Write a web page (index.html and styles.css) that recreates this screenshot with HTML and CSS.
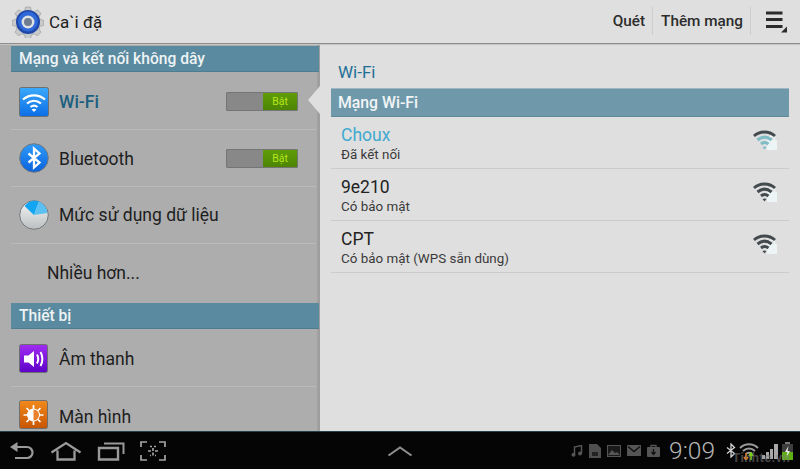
FILE: index.html
```html
<!DOCTYPE html>
<html lang="vi">
<head>
<meta charset="utf-8">
<title>Cài đặt</title>
<link rel="stylesheet" href="styles.css">
</head>
<body>
<div class="app">
  <header class="topbar">
    <div class="brand">
      <svg class="gear" viewBox="0 0 32 32" width="32" height="32">
        <path d="M13.500 1h5l.8 3.600 3 1.200 3.100-2 3.600 3.600-2 3.100 1.200 3 3.600.8v5l-3.600.8-1.200 3 2 3.100-3.600 3.600-3.100-2-3 1.200-.8 3.600h-5l-.8-3.600-3-1.200-3.100 2-3.600-3.600 2-3.100-1.200-3-3.600-.8v-5l3.600-.8 1.200-3-2-3.100 3.600-3.600 3.100 2 3-1.200z" fill="#c9cbcb" stroke="#9c9e9e" stroke-width=".7"/>
        <circle cx="16" cy="16" r="12" fill="#1f47a8"/>
        <circle cx="16" cy="15.500" r="10" fill="#2f68d8"/>
        <circle cx="16" cy="16" r="6.500" fill="#dfe2e4"/>
        <circle cx="16" cy="16" r="4" fill="#6f7c90"/>
      </svg>
      <span class="brand-title">Ca`i đặ</span>
    </div>
    <nav class="actions">
      <span class="action">Quét</span>
      <span class="action">Thêm mạng</span>
      <span class="menu-btn">
        <svg viewBox="0 0 24 24" width="24" height="24">
          <path d="M2 2.500h16.500v3H2zM2 9h16.500v3H2zM2 16h16.500v3H2z" fill="#2c2c2c"/>
          <path d="M23 17.500v6h-6z" fill="#2c2c2c"/>
        </svg>
      </span>
    </nav>
  </header>

  <main class="content">
    <aside class="sidebar">
      <div class="section">Mạng và kết nối không dây</div>
      <div class="row row-first">
        <svg class="ico" viewBox="0 0 30 30" width="30" height="30">
          <defs><linearGradient id="gb" x1="0" y1="0" x2="0" y2="1"><stop offset="0" stop-color="#3aa9fb"/><stop offset="1" stop-color="#0c6ee6"/></linearGradient></defs>
          <rect x="0.500" y="0.500" width="29" height="29" rx="2" fill="url(#gb)" stroke="#6d7070"/>
          <path d="M4 12.500c6.500-5.500 15.500-5.500 22 0M8 16.500c4.300-3.500 9.700-3.500 14 0M11.500 20c2.200-1.700 4.800-1.700 7 0" fill="none" stroke="#fff" stroke-width="2.200"/>
          <path d="M15 25l-2.400-2.500c1.500-1 3.300-1 4.800 0z" fill="#fff"/>
        </svg>
        <span class="label label-active">Wi-Fi</span>
        <span class="toggle"><span class="toggle-off"></span><span class="toggle-on">Bật</span></span>
      </div>
      <div class="row">
        <svg class="ico" viewBox="0 0 30 30" width="30" height="30">
          <defs><linearGradient id="gc" x1="0" y1="0" x2="0" y2="1"><stop offset="0" stop-color="#2f9bfa"/><stop offset="1" stop-color="#0b62dc"/></linearGradient></defs>
          <circle cx="15" cy="15" r="14.300" fill="url(#gc)" stroke="#73787a"/>
          <path d="M9.500 10.500l11 9-5.500 5V5.500l5.500 5-11 9" fill="none" stroke="#fff" stroke-width="2.300"/>
        </svg>
        <span class="label">Bluetooth</span>
        <span class="toggle"><span class="toggle-off"></span><span class="toggle-on">Bật</span></span>
      </div>
      <div class="row">
        <svg class="ico" viewBox="0 0 30 30" width="30" height="30">
          <defs><linearGradient id="gd" x1="0" y1="0" x2="0" y2="1"><stop offset="0" stop-color="#f4f4f4"/><stop offset="1" stop-color="#bcc0c2"/></linearGradient></defs>
          <circle cx="15" cy="15" r="14.300" fill="url(#gd)" stroke="#73787a"/>
          <path d="M15 15L5.500 6A14 14 0 0 1 20 1.500z" fill="#12a5f2"/>
          <path d="M15 15L20 1.500A14 14 0 0 1 28.500 13z" fill="#5cc0f2"/>
        </svg>
        <span class="label label-tight">Mức sử dụng dữ liệu</span>
      </div>
      <div class="row row-more"><span class="label">Nhiều hơn...</span></div>
      <div class="section">Thiết bị</div>
      <div class="row row-first">
        <svg class="ico" viewBox="0 0 30 30" width="30" height="30">
          <defs><linearGradient id="ge" x1="0" y1="0" x2="0" y2="1"><stop offset="0" stop-color="#a12cf2"/><stop offset="1" stop-color="#5d04c8"/></linearGradient></defs>
          <rect x="0.500" y="0.500" width="28" height="28" rx="2" fill="url(#ge)" stroke="#6d7070"/>
          <path d="M5 11.500h4.500L15 7v16l-5.500-4.500H5z" fill="#fff"/>
          <path d="M18 10.500c1.500 2.700 1.500 6.300 0 9M21.500 8c2.500 4 2.500 10 0 14" fill="none" stroke="#fff" stroke-width="2"/>
        </svg>
        <span class="label">Âm thanh</span>
      </div>
      <div class="row row-last">
        <svg class="ico" viewBox="0 0 30 30" width="30" height="30">
          <defs><linearGradient id="gf" x1="0" y1="0" x2="0" y2="1"><stop offset="0" stop-color="#f28a1c"/><stop offset="1" stop-color="#c85504"/></linearGradient></defs>
          <rect x="0.500" y="0.500" width="28" height="28" rx="2" fill="url(#gf)" stroke="#6d7070"/>
          <circle cx="14.500" cy="15" r="6.500" fill="#fff"/>
          <path d="M14.500 5v20M4.500 15h20M7.500 8l14 14M21.500 8l-14 14" stroke="#fff" stroke-width="1.700"/>
          <path d="M14.500 9.500a5.500 5.500 0 0 1 0 11z" fill="#e9822a"/>
        </svg>
        <span class="label">Màn hình</span>
      </div>
    </aside>

    <section class="detail">
      <div class="pointer"></div>
      <div class="detail-title">Wi-Fi</div>
      <div class="detail-section">Mạng Wi-Fi</div>
      <div class="network">
        <div class="net-text"><div class="net-name net-name-on">Choux</div><div class="net-sub">Đã kết nối</div></div>
        <svg class="net-ico" viewBox="0 0 26 24" width="26" height="24">
          <rect x="14" y="11" width="10" height="10" fill="#edf4f6"/>
          <path d="M16.500 11V9.500a2.500 2.500 0 0 1 5 0V11" fill="none" stroke="#edf4f6" stroke-width="1.500"/>
          <path d="M1 7c6-5.300 15-5.300 21 0" fill="none" stroke="#434a4e" stroke-width="3"/>
          <path d="M4.500 11c4.500-3.700 9.500-3.700 14 0M8 15c2.500-2 5-2 7.500 0" fill="none" stroke="#7fbcc6" stroke-width="3"/>
          <path d="M11.500 20.500l-2-2.500c1.300-.8 2.700-.8 4 0z" fill="#7fbcc6"/>
        </svg>
      </div>
      <div class="network">
        <div class="net-text"><div class="net-name">9e210</div><div class="net-sub">Có bảo mật</div></div>
        <svg class="net-ico" viewBox="0 0 26 24" width="26" height="24">
          <rect x="14" y="11" width="10" height="10" fill="#edf4f6"/>
          <path d="M16.500 11V9.500a2.500 2.500 0 0 1 5 0V11" fill="none" stroke="#edf4f6" stroke-width="1.500"/>
          <path d="M1 7c6-5.300 15-5.300 21 0M4.500 11c4.500-3.700 9.500-3.700 14 0M8 15c2.500-2 5-2 7.500 0" fill="none" stroke="#434a4e" stroke-width="3"/>
          <path d="M11.500 20.500l-2-2.500c1.300-.8 2.700-.8 4 0z" fill="#434a4e"/>
        </svg>
      </div>
      <div class="network">
        <div class="net-text"><div class="net-name">CPT</div><div class="net-sub">Có bảo mật (WPS sẵn dùng)</div></div>
        <svg class="net-ico" viewBox="0 0 26 24" width="26" height="24">
          <rect x="14" y="11" width="10" height="10" fill="#edf4f6"/>
          <path d="M16.500 11V9.500a2.500 2.500 0 0 1 5 0V11" fill="none" stroke="#edf4f6" stroke-width="1.500"/>
          <path d="M1 7c6-5.300 15-5.300 21 0M4.500 11c4.500-3.700 9.500-3.700 14 0M8 15c2.500-2 5-2 7.500 0" fill="none" stroke="#434a4e" stroke-width="3"/>
          <path d="M11.500 20.500l-2-2.500c1.300-.8 2.700-.8 4 0z" fill="#434a4e"/>
        </svg>
      </div>
    </section>
  </main>

  <footer class="navbar">
    <div class="nav-left">
      <svg viewBox="0 0 26 18" width="26" height="18"><path d="M3 5h15a5 5 0 0 1 0 11H6" fill="none" stroke="#9a9a9a" stroke-width="2.200"/><path d="M8.500 0v10L1 5z" fill="#9a9a9a"/></svg>
      <svg viewBox="0 0 32 20" width="32" height="20"><path d="M1.500 11.500L16 2l14.500 9.500M7.500 9.500V18.500h17V9.500" fill="none" stroke="#9a9a9a" stroke-width="2.300"/></svg>
      <svg viewBox="0 0 28 20" width="28" height="20"><path d="M2 7h19v11.500H2z" fill="none" stroke="#9a9a9a" stroke-width="2.400"/><path d="M7 2.500h19.500V13" fill="none" stroke="#9a9a9a" stroke-width="2"/></svg>
      <svg viewBox="0 0 26 20" width="26" height="20"><path d="M1 6V1h6M19 1h6v5M25 14v5h-6M7 19H1v-5M10 5.500h2M14 5.500h2M13 7v3M13 11.500v3M8 10h3M15 10h3M10 14.500h1M15 14.500h1" fill="none" stroke="#a5a5a5" stroke-width="1.700"/></svg>
    </div>
    <svg class="nav-up" viewBox="0 0 26 10" width="26" height="10"><path d="M1.500 9.500L13 1.500l11.500 8" fill="none" stroke="#8f8f8f" stroke-width="2"/></svg>
    <div class="nav-right">
      <div class="notif">
        <svg viewBox="0 0 12 12" width="12" height="12"><path d="M3.500 9.500V2l7-1.500v8" fill="none" stroke="#555" stroke-width="1.500"/><circle cx="2.500" cy="9.700" r="2" fill="#555"/><circle cx="9" cy="8.500" r="2" fill="#555"/></svg>
        <svg viewBox="0 0 12 14" width="12" height="14"><path d="M0 0h8l4 4v10H0z" fill="#4f4f4f"/><rect x="3" y="8" width="6" height="4" fill="#222"/></svg>
        <svg viewBox="0 0 14 12" width="14" height="12"><rect x=".5" y=".5" width="13" height="11" fill="#1a1a1a" stroke="#555"/><path d="M1 10l4-5 3 3 2-1 3 3z" fill="#555"/></svg>
        <svg viewBox="0 0 14 11" width="14" height="11"><rect width="14" height="11" fill="#555"/><path d="M1 1.500l6 5 6-5" fill="none" stroke="#111" stroke-width="1.400"/></svg>
        <svg viewBox="0 0 13 13" width="13" height="13"><path d="M4 3V1.500h5V3" fill="none" stroke="#555" stroke-width="1.300"/><rect y="3" width="13" height="10" rx="1" fill="#555"/><path d="M6.500 5v5M4.500 8l2 2.500 2-2.500" fill="none" stroke="#111" stroke-width="1.300"/></svg>
      </div>
      <span class="clock">9:09</span>
      <div class="status">
        <svg viewBox="0 0 10 15" width="10" height="15"><path d="M1 4.500l7.500 6L5 14V1l3.500 3.500-7.500 6" fill="none" stroke="#d5d5d5" stroke-width="1.300"/></svg>
        <svg viewBox="0 0 20 18" width="20" height="18"><path d="M1 6c5-5 13-5 18 0M4 9c3.500-3.200 8.500-3.200 12 0M7 12c2-1.600 4-1.600 6 0" fill="none" stroke="#9a9a9a" stroke-width="2"/><path d="M7 11v6M5 15l2 3 2-3" fill="none" stroke="#e07b1c" stroke-width="1.600"/><path d="M12 18v-6M10 14l2-3 2 3" fill="none" stroke="#7fd11c" stroke-width="1.600"/></svg>
        <svg viewBox="0 0 17 16" width="17" height="16"><path d="M0 16h3v-4H0zM4 16h3v-7H4zM8 16h3V6H8zM12 16h4V1h-4z" fill="#a8a8a8"/></svg>
        <svg viewBox="0 0 11 18" width="11" height="18"><rect x="3" y="0" width="5" height="2" fill="#777"/><rect y="2" width="11" height="16" fill="#3d3d3d"/><rect y="10" width="11" height="8" fill="#5fae17"/><path d="M6.500 4L3 10h2.500l-1 5L8 9H5.500z" fill="#eee"/></svg>
      </div>
      <span class="watermark">Tinhte.vn</span>
    </div>
  </footer>
</div>
</body>
</html>
```

FILE: styles.css
```css
* { box-sizing: border-box; }
html, body { margin: 0; padding: 0; }
body { width: 800px; height: 469px; overflow: hidden; font-family: Roboto, "Liberation Sans", sans-serif; }
.app { width: 800px; height: 469px; display: flex; flex-direction: column; }

.topbar { height: 44px; flex: none; display: flex; align-items: center; justify-content: space-between; background: #dfdfdf; border-bottom: 1px solid #8d8d8d; box-shadow: 0 1px 0 #c5c5c5; position: relative; z-index: 2; }
.brand { display: flex; align-items: center; padding-left: 12px; gap: 5px; }
.brand-title { font-size: 17px; color: #1c1c1c; }
.actions { display: flex; align-items: center; height: 28px; margin-top: -1px; }
.action { height: 28px; display: flex; align-items: center; padding: 0 7px 0 8px; font-size: 15.300px; font-weight: 500; color: #2c2c2c; border-right: 1px solid #cdcdcd; }
.menu-btn { width: 49px; display: flex; justify-content: center; padding-left: 1px; }

.content { flex: 1; min-height: 0; display: flex; }
.sidebar { width: 320px; flex: none; padding: 2px 0 0 11px; background: linear-gradient(to right, #adadad 317px, #a0a0a0 317px); border-right: 1px solid #9d9d9d; overflow: hidden; }
.section { width: 308px; height: 26px; display: flex; align-items: center; padding-left: 8px; background: #5a8a9f; border-bottom: 1px solid #4e7c90; color: #eef3f5; font-size: 15.600px; font-weight: 500; }
.row { width: 305px; height: 57px; display: flex; align-items: center; padding-left: 8px; gap: 10px; border-top: 1px solid #bababa; }
.row-first { border-top: 0; height: 57px; padding-top: 2px; }
.row-more { padding-left: 36px; height: 60px; padding-bottom: 2px; }
.row-last { height: 57px; }
.row-last .label { padding-top: 3px; }
.ico { flex: none; }
.label { flex: 1; font-size: 17.500px; color: #1e1e1e; padding-top: 1px; }
.label-tight { padding-top: 0; margin-top: -1px; }
.label-active { color: #1a5f80; font-weight: 500; }
.toggle { display: flex; width: 72px; height: 19px; margin-right: 18px; flex: none; border: 1px solid #757575; border-radius: 1px; }
.toggle-off { width: 36px; background: #888; }
.toggle-on { flex: 1; display: flex; align-items: center; justify-content: center; background: linear-gradient(#5f9d09, #4c8504); color: #b7e61c; font-size: 10.500px; }

.detail { flex: 1; min-width: 0; padding: 15px 11px 0 11px; background: #dfdfdf; position: relative; }
.pointer { position: absolute; left: -12px; top: 42px; width: 0; height: 0; border-style: solid; border-width: 14px 12px 14px 0; border-color: transparent #dfdfdf transparent transparent; }
.detail-title { height: 29px; padding-left: 7px; font-size: 17px; color: #226f96; line-height: 26px; }
.detail-section { height: 29px; display: flex; align-items: center; padding-left: 7px; background: #6f99ab; border-top: 1px solid #9db6c1; border-bottom: 1px solid #5f8a9c; color: #f1f5f6; font-size: 15.800px; font-weight: 500; }
.network { height: 52px; display: flex; align-items: center; justify-content: space-between; padding: 0 8px 0 10px; border-bottom: 1px solid #cbcbcb; }
.net-text { margin-top: 1px; }
.net-name { font-size: 17.500px; line-height: 22px; color: #222; }
.net-name-on { color: #3eaacf; }
.net-sub { font-size: 13.400px; line-height: 17px; color: #3a3a3a; }
.net-ico { flex: none; margin-top: -4px; margin-right: 2px; }

.navbar { height: 38px; flex: none; display: flex; align-items: center; justify-content: space-between; background: #050505; border-top: 1px solid #27404c; position: relative; }
.nav-left { display: flex; align-items: center; gap: 15px; padding-left: 9px; }
.nav-up { position: absolute; left: 387px; top: 14px; }
.nav-right { display: flex; align-items: center; padding-right: 7px; }
.notif { display: flex; align-items: center; gap: 6px; margin-right: 9px; }
.clock { font-size: 24.500px; color: #b5b5b5; font-weight: 300; margin-right: 11px; }
.status { display: flex; align-items: center; gap: 3px; }
.watermark { position: absolute; right: 10px; bottom: 4px; font-size: 13px; font-weight: 700; color: rgba(125, 125, 125, 0.55); letter-spacing: 0.3px; }
```
